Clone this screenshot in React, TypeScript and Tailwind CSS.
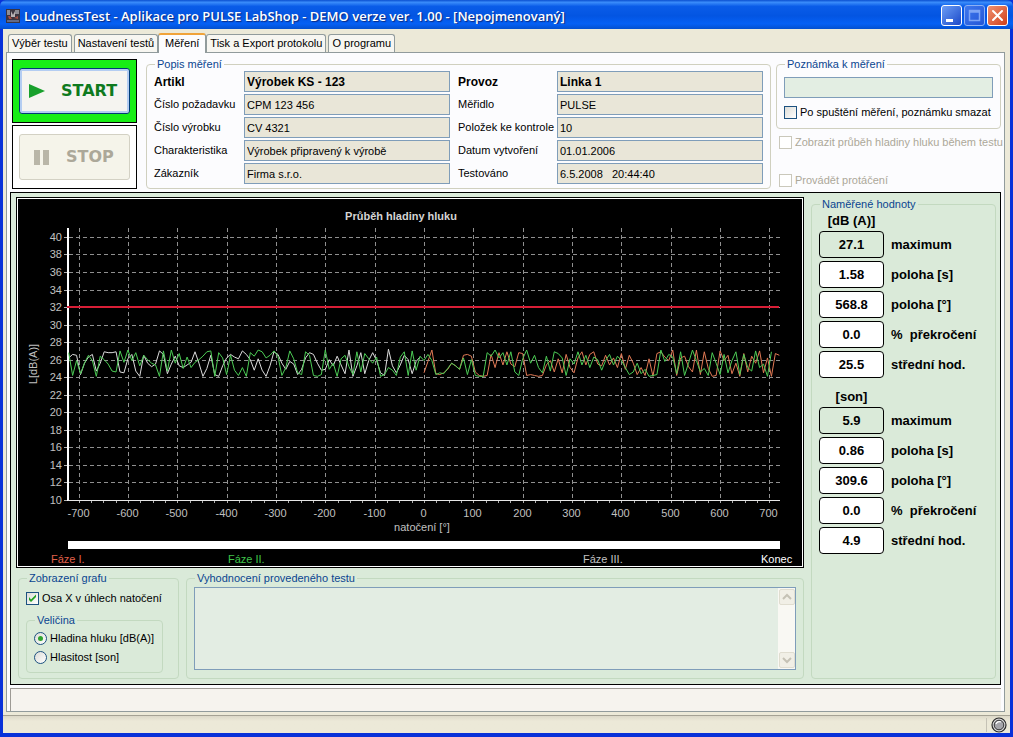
import { useState } from "react";
import type { ReactNode } from "react";

const TABS = ["Výběr testu", "Nastavení testů", "Měření", "Tisk a Export protokolu", "O programu"];

const LEFT_FIELDS = [
  { id: "artikl", label: "Artikl", value: "Výrobek KS - 123", bold: true },
  { id: "pozadavek", label: "Číslo požadavku", value: "CPM 123 456" },
  { id: "vyrobek", label: "Číslo výrobku", value: "CV 4321" },
  { id: "charakteristika", label: "Charakteristika", value: "Výrobek připravený k výrobě" },
  { id: "zakaznik", label: "Zákazník", value: "Firma s.r.o." },
];

const RIGHT_FIELDS = [
  { id: "provoz", label: "Provoz", value: "Linka 1", bold: true },
  { id: "meridlo", label: "Měřidlo", value: "PULSE" },
  { id: "polozek", label: "Položek ke kontrole", value: "10" },
  { id: "datum", label: "Datum vytvoření", value: "01.01.2006" },
  { id: "testovano", label: "Testováno", value: "6.5.2008   20:44:40" },
];

const MEASURED = [
  { unit: "[dB (A)]", values: ["27.1", "1.58", "568.8", "0.0", "25.5"] },
  { unit: "[son]", values: ["5.9", "0.86", "309.6", "0.0", "4.9"] },
];
const MEASURED_LABELS = ["maximum", "poloha [s]", "poloha [°]", "%  překročení", "střední hod."];

// one sample every 8 degrees
const STEP = 8;
const PHASE_3 = [
  26.2, 26.6, 26.5, 24.3, 25.6, 26.3, 26.6, 24.7, 25.6, 26.9, 26.8, 26.8, 26.9, 24.6, 24.5, 26.1, 26.6, 24.7,
  24.1, 26.5, 25.6, 25.2, 25.5, 27, 26.6, 24.4, 25.5, 26.4, 25.3, 25.1, 25.4, 25.7, 26.9, 25.6, 24.1, 25,
  26.5, 24.3, 24.1, 25.3, 26.2, 26.6, 26.3, 26.1, 27, 26.6, 26, 24.8, 26.1, 24.8, 24.1, 25.3, 26.9, 26.6,
  25.6, 24.9, 25.8, 25.5, 24.3, 24.9, 26.2, 26.8, 26.6, 25.6, 24.8, 24.9, 26, 25.3, 26.4, 25.4, 24.4, 27.1,
  24.1, 25.3, 26.8, 24.4, 25.9, 26.8, 25.9, 24.5, 24.2, 27.2, 25.3, 24.5, 25.4, 26.5, 26, 24.4, 25.8, 26.3,
];
const PHASE_2 = [
  26.8, 24.2, 25.9, 24.4, 25.6, 26.5, 25.9, 24.1, 26.4, 26, 25.5, 24.7, 24.6, 27, 25.7, 27.1, 25.9, 26.8,
  25.3, 26.5, 26, 25.6, 25.4, 24.1, 27, 24.7, 27.1, 25.6, 26.7, 25, 26.3, 25.1, 25.7, 26, 26.4, 26.9,
  27, 24.1, 26.8, 26.2, 24.3, 26.5, 24.8, 24.2, 25.1, 24.1, 26.8, 26.4, 27.1, 26.9, 26.2, 26.5, 27, 26.4,
  24.2, 25.1, 27, 26.1, 24.5, 24.3, 26.9, 26.5, 24.2, 24.1, 24.3, 27.1, 24.9, 25.6, 24.1, 26.1, 26.5, 25.2,
  24.3, 26.9, 24.6, 26.7, 26.1, 25.6, 26.3, 24.1, 24.3, 25.1, 24.8, 24.2, 26.3, 26.9, 24.2, 27, 24.8, 26.4,
  25.9, 26.6, 25.9, 24.3, 24.5, 24.4, 25, 25.6, 25.3, 24.9, 26.2, 24.3, 26, 24.2, 24.1, 24.1, 26.8, 26.4,
  27.1, 26.2, 26.8, 25.4, 26.9, 24.6, 24.2, 26.1, 27.1, 25.6, 26.5, 25.1, 24.5, 26.4, 24.7, 26.9, 26.7, 26.2,
  24.2, 26.1, 25.5, 26.9, 25.4, 26.5, 25.1, 26.3, 26, 24.8, 25.9, 26.6, 25.4, 26.4, 25.9, 25.1, 24.3, 24.6,
  25.6, 24.4, 24.9, 24.1, 24.2, 24.3, 27.1, 25.8, 26.6, 26.3, 24.4, 26.9, 24.2, 25.6, 27.1, 25.9, 24.6, 25,
  24.2, 26.8, 25.6, 24.3, 26.6, 24.5, 25.9, 26.9, 24.3, 26.6, 25.1, 24.7, 27, 25.1, 25.5, 24.1, 26.9,
];
const PHASE_1 = [
  24.5, 25.8, 27.1, 24.4, 24.3, 24.5, 24.9, 25.6, 25.3, 24.9, 26.5, 26.6, 26.4, 24.6, 24.2, 24.1, 24.2, 26.6,
  25.1, 26.8, 25.4, 26.9, 25.5, 25.2, 26.8, 26.7, 24.2, 24.3, 24.2, 24.1, 24.2, 25.4, 25.9, 24.6, 26.1, 24.5,
  26.6, 25.1, 24.5, 26.2, 26.9, 25.4, 26.6, 26.9, 25.5, 25.3, 26.5, 25.4, 26.2, 25.1, 26.7, 24.9, 26.5, 25.6,
  24.3, 25.1, 24.2, 26.1, 24.1, 26.7, 26.9, 26.3, 25.9, 27.1, 24.2, 26.2, 26.4, 25.2, 24.6, 27.1, 24.3, 26.9,
  25, 24.1, 24.2, 27, 25.9, 26.5, 24.4, 25.6, 24.1, 26.7, 24.6, 26.4, 25.6, 27, 24.5, 26.2, 24.1, 26.7, 26.5,
];

const px = (deg: number) => Math.round(406 + deg * 0.4935) + 0.5;
const py = (db: number) => Math.round(301 - (db - 10) * 8.77) + 0.5;
const trace = (data: number[], from: number) =>
  data.map((v, i) => `${406 + (from + i * STEP) * 0.4935},${301 - (v - 10) * 8.77}`).join(" ");

const X_TICKS = Array.from({ length: 15 }, (_, i) => -700 + i * 100);
const Y_TICKS = Array.from({ length: 16 }, (_, i) => 10 + i * 2);
const MINOR_TICKS = Array.from({ length: 57 }, (_, i) => -700 + i * 25);

function NoiseChart() {
  return (
    <svg viewBox="0 0 784 367" className="block w-full bg-black" fontSize="11" fill="#c0c0c0" shapeRendering="crispEdges">
      <text x="383" y="21" textAnchor="middle" fontWeight="bold" fill="#d4d4d4">
        Průběh hladiny hluku
      </text>
      <g stroke="#8f8f8f" strokeDasharray="4 3">
        {X_TICKS.map((t) => (
          <line key={t} x1={px(t)} x2={px(t)} y1="29" y2="304" />
        ))}
        {Y_TICKS.map((t) => (
          <line key={t} x1="51" x2="762" y1={py(t)} y2={py(t)} />
        ))}
      </g>
      <g stroke="#b0b0b0">
        {MINOR_TICKS.map((t) => (
          <line key={t} x1={px(t)} x2={px(t)} y1="302" y2="304" />
        ))}
        {Y_TICKS.map((t) => (
          <line key={t} x1="46" x2="50" y1={py(t)} y2={py(t)} />
        ))}
      </g>
      <path d="M50 29V302" stroke="#fff" strokeWidth="2" />
      <path d="M50 301.500H762" stroke="#e6e6e6" />
      <path d="M49 108H761" stroke="#d81e36" strokeWidth="2" />
      <g fill="none" strokeLinejoin="round" shapeRendering="auto">
        <polyline points={trace(PHASE_3, -720)} stroke="#dcdcdc" />
        <polyline points={trace(PHASE_1, 0)} stroke="#e27a55" />
        <polyline points={trace(PHASE_2, -720)} stroke="#4ccc55" />
      </g>
      {Y_TICKS.map((t) => (
        <text key={t} x="44" y={py(t) + 3.5} textAnchor="end">
          {t}
        </text>
      ))}
      {X_TICKS.map((t) => (
        <text key={t} x={px(t) - 1} y="318" textAnchor="middle">
          {t}
        </text>
      ))}
      <text x="404" y="332" textAnchor="middle">
        natočení [°]
      </text>
      <text transform="translate(19 165) rotate(-90)" textAnchor="middle">
        L[dB(A)]
      </text>
      <rect x="50" y="342" width="712" height="8" fill="#fff" />
      <text x="33" y="364" fill="#e0614a">
        Fáze I.
      </text>
      <text x="210" y="364" fill="#3fc24a">
        Fáze II.
      </text>
      <text x="565" y="364">Fáze III.</text>
      <text x="743" y="364" fill="#fff">
        Konec
      </text>
    </svg>
  );
}

type GroupProps = { title: string; className?: string; children: ReactNode };

function Group({ title, className = "", children }: GroupProps) {
  return (
    <fieldset className={`min-w-0 rounded-[4px] border ${className}`}>
      <legend className="ml-px px-[2px] leading-[14px] text-[#0a4590]">{title}</legend>
      {children}
    </fieldset>
  );
}

type Field = { id: string; label: string; value: string; bold?: boolean };

type FieldColumnProps = { fields: Field[]; className: string; labelWidth: string };

function FieldColumn({ fields, className, labelWidth }: FieldColumnProps) {
  return (
    <div className={`flex min-w-0 flex-col gap-[2px] ${className}`}>
      {fields.map((f) => (
        <div key={f.id} className={`flex items-center ${f.bold ? "text-xs font-bold" : ""}`}>
          <label htmlFor={f.id} className={`${labelWidth} shrink-0 whitespace-nowrap`}>
            {f.label}
          </label>
          <input
            id={f.id}
            readOnly
            defaultValue={f.value}
            className="h-[21px] w-full min-w-0 border border-[#7f9db9] bg-[#e9e6d8] px-[2px] outline-none"
          />
        </div>
      ))}
    </div>
  );
}

type CheckProps = { label: string; disabled?: boolean; defaultChecked?: boolean };

function Check({ label, disabled, defaultChecked }: CheckProps) {
  return (
    <label className={`flex items-center gap-[3px] whitespace-nowrap leading-[14px] ${disabled ? "text-[#aca899]" : ""}`}>
      <span className="relative flex h-[13px] w-[13px] shrink-0">
        <input
          type="checkbox"
          disabled={disabled}
          defaultChecked={defaultChecked}
          className="peer h-[13px] w-[13px] appearance-none border border-[#1c5180] bg-gradient-to-br from-[#dcdcd7] to-white disabled:border-[#cac8bb] disabled:from-white"
        />
        <svg viewBox="0 0 13 13" className="pointer-events-none absolute inset-0 hidden peer-checked:block">
          <path d="M3 5v3l2 2 5-5V2.500L5 7.500z" fill="#21a121" />
        </svg>
      </span>
      {label}
    </label>
  );
}

function Radio({ label, defaultChecked }: { label: string; defaultChecked?: boolean }) {
  return (
    <label className="flex items-center gap-[3px] whitespace-nowrap leading-[14px]">
      <span className="relative flex h-[13px] w-[13px] shrink-0">
        <input
          type="radio"
          name="velicina"
          defaultChecked={defaultChecked}
          className="peer h-[13px] w-[13px] appearance-none rounded-full border border-[#1c5180] bg-gradient-to-br from-[#dcdcd7] to-white"
        />
        <span className="pointer-events-none absolute inset-1 hidden rounded-full bg-[#2fa52f] peer-checked:block" />
      </span>
      {label}
    </label>
  );
}

function TitleBar() {
  const button = "flex h-[21px] w-[21px] items-center justify-center rounded-[3px] border";
  return (
    <header className="flex h-[29px] shrink-0 items-center rounded-t-[6px] bg-[linear-gradient(180deg,#0a4fd0_0%,#3a8cfa_8%,#0a5ce8_22%,#0355e2_55%,#0560f5_82%,#0350cf_100%)] pt-[2px] pr-[5px] pl-[6px]">
      <svg viewBox="0 0 14 14" className="mr-1 h-[14px] w-[14px] shrink-0">
        <rect width="14" height="14" fill="#3a3440" />
        <path d="M1 1h3v5H1zM9 1h4v4H9z" fill="#8d8c95" />
        <path d="M5 2l2 4 2-4v6H5z" fill="#b9b2b4" />
        <path d="M2 7h2l2 3H3zM8 9l4-2v3z" fill="#a64d42" />
        <path d="M1 11h12v2H1z" fill="#626a86" />
      </svg>
      <h1 className="flex-1 truncate font-['Open_Sans',sans-serif] text-[13px] leading-4 font-semibold text-white [text-shadow:1px_1px_1px_#0a2a80]">
        LoudnessTest - Aplikace pro PULSE LabShop - DEMO verze ver. 1.00 - [Nepojmenovaný]
      </h1>
      <div className="flex gap-[2px]">
        <button aria-label="Minimalizovat" className={`${button} border-white bg-gradient-to-br from-[#6d9df5] to-[#1d47c8]`}>
          <svg viewBox="0 0 19 19" className="h-[19px] w-[19px]">
            <rect x="4" y="13" width="7" height="3" fill="#fff" />
          </svg>
        </button>
        <button aria-label="Maximalizovat" disabled className={`${button} border-[#8cb0f5] bg-gradient-to-br from-[#3f78ee] to-[#2456d6]`}>
          <svg viewBox="0 0 19 19" className="h-[19px] w-[19px]">
            <path d="M4.500 4.500h10v10h-10zM4 6h11" fill="none" stroke="#7ea5f5" strokeWidth="1.500" />
          </svg>
        </button>
        <button aria-label="Zavřít" className={`${button} border-white bg-gradient-to-br from-[#ee9070] to-[#d03c10]`}>
          <svg viewBox="0 0 19 19" className="h-[19px] w-[19px]">
            <path d="M5 5l9 9M14 5l-9 9" stroke="#fff" strokeWidth="2" strokeLinecap="round" />
          </svg>
        </button>
      </div>
    </header>
  );
}

function RunButtons() {
  const frame = "h-16 border border-black px-[6px] py-2";
  const button =
    "flex h-full w-full items-center gap-4 rounded-[3px] border font-['DejaVu_Sans',sans-serif] text-base font-bold";
  return (
    <div className="mt-[2px] flex w-[125px] shrink-0 flex-col gap-[2px]">
      <div className={`${frame} bg-[#18ee16]`}>
        <button className={`${button} border-[#003c74] bg-[#f5f4f0] pl-[9px] text-[#0e7a1e] shadow-[inset_0_0_0_2px_#b4cdf2]`}>
          <svg viewBox="0 0 16 14" className="h-[14px] w-4">
            <path d="M0 0l16 7-16 7z" fill="#18a02c" />
          </svg>
          START
        </button>
      </div>
      <div className={`${frame} bg-white`}>
        <button disabled className={`${button} border-[#d3d1c4] bg-[#f5f4ea] pl-[14px] text-[#aca899]`}>
          <svg viewBox="0 0 16 15" className="h-[15px] w-4">
            <path d="M0 0h6v15H0zM9 0h6v15H9z" fill="#b9b6a8" />
          </svg>
          STOP
        </button>
      </div>
    </div>
  );
}

function MeasuredValues() {
  return (
    <Group title="Naměřené hodnoty" className="w-[185px] shrink-0 border-[#c3d9c0] px-[7px]">
      {MEASURED.map((block, n) => (
        <section key={block.unit} className={`text-[13px] font-bold ${n > 0 ? "mt-[9px]" : ""}`}>
          <h2 className="w-[65px] text-center whitespace-nowrap leading-5">{block.unit}</h2>
          <div className="flex flex-col gap-[3px]">
            {block.values.map((v, i) => (
              <div key={MEASURED_LABELS[i]} className="flex items-center gap-[7px]">
                <output
                  aria-label={MEASURED_LABELS[i]}
                  className={`flex h-[27px] w-[65px] items-center justify-center rounded-[4px] border border-black ${i === 0 ? "bg-[#daead9]" : "bg-white"}`}
                >
                  {v}
                </output>
                <span className={`whitespace-pre ${i === 3 ? "first-letter:font-normal" : ""}`}>{MEASURED_LABELS[i]}</span>
              </div>
            ))}
          </div>
        </section>
      ))}
    </Group>
  );
}

function ScrollArrow({ label, d }: { label: string; d: string }) {
  return (
    <button aria-label={label} disabled className="flex h-4 w-4 items-center justify-center rounded-[2px] border border-[#e0ddd0] bg-[#f1efe6]">
      <svg viewBox="0 0 10 8" className="h-2 w-[10px]">
        <path d={d} fill="none" stroke="#c5c2b5" strokeWidth="2" />
      </svg>
    </button>
  );
}

export default function App() {
  const [tab, setTab] = useState(2);

  return (
    <div className="flex min-h-screen flex-col bg-[#0831d9] pb-1 font-['Liberation_Sans',Arial,sans-serif] text-[11px] text-black">
      <TitleBar />
      <div className="mx-[3px] flex flex-1 flex-col bg-[#ece9d8]">
        <nav role="tablist" className="flex items-end gap-[2px] pt-1 pl-[5px]">
          {TABS.map((name, i) => (
            <button
              key={name}
              role="tab"
              aria-selected={tab === i}
              onClick={() => setTab(i)}
              className={
                tab === i
                  ? "relative -mx-[2px] -mb-px h-5 rounded-t-[3px] border-x border-t-2 border-x-[#919b9c] border-t-[#f0a33a] bg-[#fcfcfe] px-[6px] pb-[2px] whitespace-nowrap"
                  : "h-[18px] rounded-t-[3px] border border-b-0 border-[#919b9c] bg-[#f7f6f1] px-[3px] whitespace-nowrap"
              }
            >
              {name}
            </button>
          ))}
        </nav>

        <main className="mr-[5px] ml-[3px] flex flex-1 flex-col border border-[#919b9c] bg-[#fcfcfe] px-[3px]">
          <div className="flex pt-1 pl-[2px]">
            <RunButtons />
            <Group title="Popis měření" className="ml-[9px] flex-1 border-[#d0d0bf] px-[7px] pb-[4px]">
              <div className="flex gap-2">
                <FieldColumn fields={LEFT_FIELDS} className="grow basis-[90px]" labelWidth="w-[90px]" />
                <FieldColumn fields={RIGHT_FIELDS} className="grow basis-[99px]" labelWidth="w-[99px]" />
              </div>
            </Group>
            <div className="ml-[5px] w-[225px] shrink-0">
              <Group title="Poznámka k měření" className="border-[#d0d0bf] px-[7px] pb-[9px]">
                <input
                  aria-label="Poznámka k měření"
                  className="mt-[6px] mb-[7px] block h-[21px] w-full border border-[#7f9db9] bg-[#e3eee3] px-[2px] outline-none"
                />
                <Check label="Po spuštění měření, poznámku smazat" />
              </Group>
              <div className="flex flex-col gap-6 pt-[6px] pl-[3px]">
                <Check label="Zobrazit průběh hladiny hluku během testu" disabled />
                <Check label="Provádět protáčení" disabled />
              </div>
            </div>
          </div>

          <section className="mt-[3px] flex flex-1 gap-[7px] border border-black bg-[#daead9] pt-1 pr-1 pb-[5px] pl-[5px]">
            <div className="flex min-w-0 flex-1 flex-col">
              <div className="border border-black">
                <div className="border border-white">
                  <NoiseChart />
                </div>
              </div>
              <div className="mt-[3px] flex flex-1 gap-[7px] pl-[2px]">
                <Group title="Zobrazení grafu" className="w-[161px] shrink-0 border-[#c3d9c0] px-[7px]">
                  <div className="pt-[6px]">
                    <Check label="Osa X v úhlech natočení" defaultChecked />
                  </div>
                  <Group title="Veličina" className="mt-2 mr-2 flex border-[#c3d9c0] px-[7px] pb-2">
                    <div className="flex flex-col gap-[5px] pt-1">
                      <Radio label="Hladina hluku [dB(A)]" defaultChecked />
                      <Radio label="Hlasitost [son]" />
                    </div>
                  </Group>
                </Group>
                <Group title="Vyhodnocení provedeného testu" className="flex flex-1 flex-col border-[#c3d9c0] px-[7px] pb-[7px]">
                  <div className="mt-[2px] flex h-[83px] border border-[#7f9db9] bg-[#e3ede3]">
                    <textarea
                      aria-label="Vyhodnocení provedeného testu"
                      readOnly
                      className="h-full flex-1 resize-none p-1 outline-none"
                    />
                    <div className="flex w-[17px] flex-col items-center justify-between bg-[#f9f8f3] py-px">
                      <ScrollArrow label="Nahoru" d="M1 6l4-4 4 4" />
                      <ScrollArrow label="Dolů" d="M1 2l4 4 4-4" />
                    </div>
                  </div>
                </Group>
              </div>
            </div>
            <MeasuredValues />
          </section>

          <div className="mt-[3px] h-[23px] border-t border-l border-[#9d9a94] bg-[#f6f3ee]" />
        </main>

        <footer className="mt-[3px] flex h-[18px] items-center justify-end gap-1 border-t border-[#a5a294] bg-gradient-to-b from-[#dcd8c8] to-[#ece9d8] to-30% pr-[3px]">
          <span className="h-[14px] w-px bg-[#c5c2b5]" />
          <svg viewBox="0 0 16 16" className="h-4 w-4">
            <circle cx="8" cy="8" r="7" fill="#d8d8d8" stroke="#2a2a2a" strokeWidth="1.200" />
            <circle cx="8" cy="8" r="4.800" fill="#a5a5aa" stroke="#333" strokeWidth="1" />
            <path d="M5 7a3.500 3.500 0 0 1 5-2" fill="none" stroke="#fff" strokeWidth="1.200" />
          </svg>
        </footer>
      </div>
    </div>
  );
}
